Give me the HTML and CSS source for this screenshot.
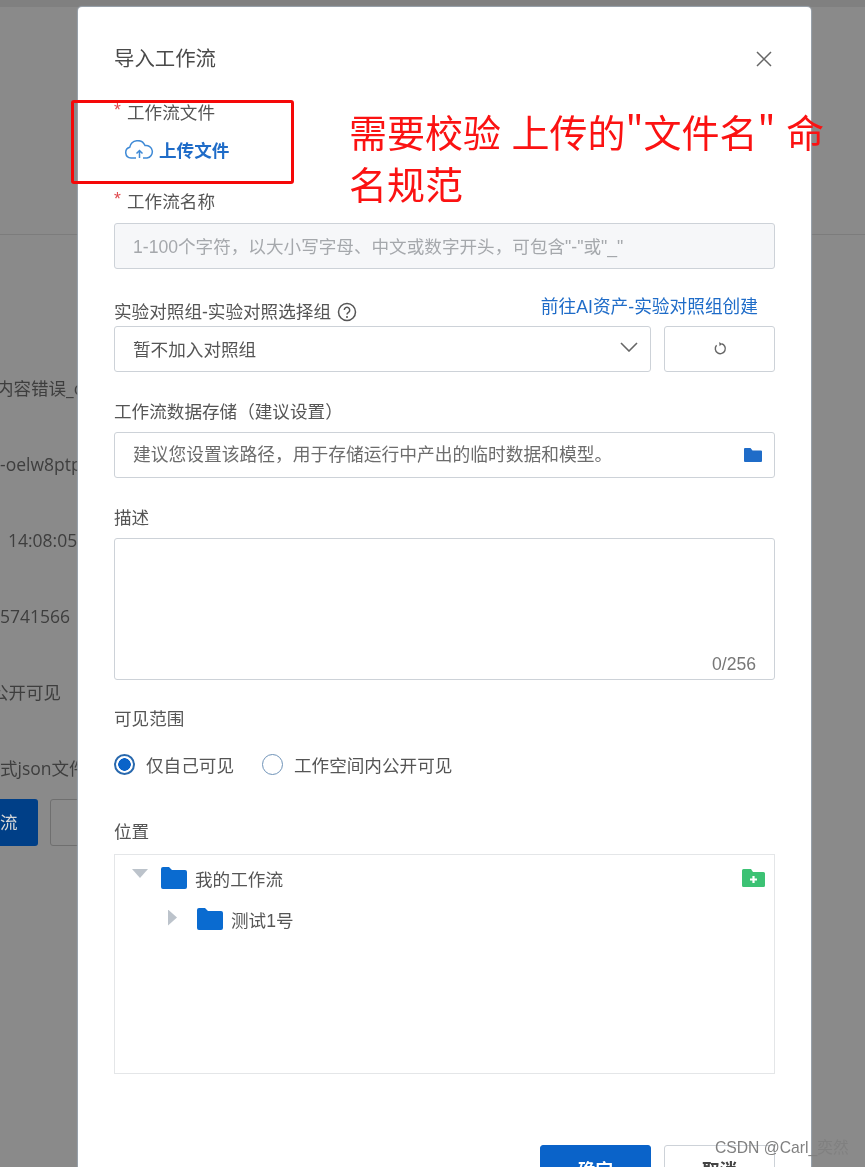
FILE: index.html
```html
<!DOCTYPE html>
<html lang="zh-CN">
<head>
<meta charset="utf-8">
<title>导入工作流</title>
<link rel="stylesheet" href="styles.css">
</head>
<body>
<div class="page">
  <div class="backdrop">
    <div class="top-strip"></div>
    <div class="divider"></div>
    <div class="bg-details">
      <div class="bg-row bg-row-a">内容错误_c</div>
      <div class="bg-row">-oelw8ptp</div>
      <div class="bg-row bg-row-b">14:08:05</div>
      <div class="bg-row">5741566</div>
      <div class="bg-row bg-row-c">公开可见</div>
      <div class="bg-row">式json文件</div>
      <div class="bg-actions">
        <span class="bg-primary">流</span>
        <span class="bg-ghost"></span>
      </div>
    </div>
  </div>

  <section class="modal">
    <header class="modal-head">
      <h1 class="modal-title">导入工作流</h1>
      <svg class="close" viewBox="0 0 18 18" width="18" height="18"><path d="M2 2 16 16M16 2 2 16" fill="none" stroke="#666" stroke-width="1.5"/></svg>
    </header>

    <div class="label gap-file"><i class="req">*</i>工作流文件</div>
    <div class="upload">
      <svg viewBox="0 0 30 19" width="30" height="19"><path d="M12 18H7A5.500 5.500 0 0 1 5.800 7.200 8 8 0 0 1 21 5.500 6.300 6.300 0 0 1 23 18H19" fill="none" stroke="#3f8ad6" stroke-width="1.500"/><path d="M15.500 18V11M12.500 13.500 15.500 10.500l3 3" fill="none" stroke="#3f8ad6" stroke-width="1.500"/></svg>
      <span>上传文件</span>
    </div>

    <div class="label gap-name"><i class="req">*</i>工作流名称</div>
    <div class="input input-disabled gap-input">1-100个字符，以大小写字母、中文或数字开头，可包含"-"或"_"</div>

    <div class="label-row gap-group">
      <div class="label">实验对照组-实验对照选择组
        <svg class="help" viewBox="0 0 20 20" width="20" height="20"><circle cx="10" cy="10" r="8.500" fill="none" stroke="#555" stroke-width="1.500"/><path d="M7.300 8a2.700 2.700 0 1 1 4.200 2.300c-1 .6-1.500 1-1.500 2.200" fill="none" stroke="#555" stroke-width="1.500"/><circle cx="10" cy="15" r="1" fill="#555"/></svg>
      </div>
      <a class="link">前往AI资产-实验对照组创建</a>
    </div>
    <div class="select-row">
      <div class="input select">
        <span>暂不加入对照组</span>
        <svg viewBox="0 0 18 10" width="18" height="10"><path d="M1 1 9 9 17 1" fill="none" stroke="#666" stroke-width="1.600"/></svg>
      </div>
      <div class="refresh">
        <svg viewBox="0 0 14 14" width="14" height="14"><path d="M8.500 1.800A5 5 0 1 1 3.600 3.300" fill="none" stroke="#666" stroke-width="1.400"/><path d="M6.200 0 9 2 6.500 4.200Z" fill="#666"/></svg>
      </div>
    </div>

    <div class="label gap-store">工作流数据存储（建议设置）</div>
    <div class="input input-path gap-input-s">
      <span>建议您设置该路径，用于存储运行中产出的临时数据和模型。</span>
      <svg viewBox="0 0 20 16" width="20" height="16"><path d="M1 2a1 1 0 0 1 1-1h5.500l2 2.500H18a1 1 0 0 1 1 1V14a1 1 0 0 1-1 1H2a1 1 0 0 1-1-1Z" fill="#1f6cc8"/></svg>
    </div>

    <div class="label gap-store">描述</div>
    <div class="textarea gap-input-s"><span class="count">0/256</span></div>

    <div class="label gap-vis">可见范围</div>
    <div class="radios">
      <label class="radio"><span class="dot dot-on"></span>仅自己可见</label>
      <label class="radio"><span class="dot"></span>工作空间内公开可见</label>
    </div>

    <div class="label gap-loc">位置</div>
    <div class="tree">
      <svg class="add" viewBox="0 0 23 18" width="23" height="18"><path d="M0 1.500A1.500 1.500 0 0 1 1.500 0H9l2 3h10.500A1.500 1.500 0 0 1 23 4.500v12a1.500 1.500 0 0 1-1.500 1.500h-20A1.500 1.500 0 0 1 0 16.500Z" fill="#3cc274"/><path d="M11.500 7v7M8 10.500h7" stroke="#fff" stroke-width="2.200"/></svg>
      <div class="node">
        <span class="caret caret-down"></span>
        <svg class="folder" viewBox="0 0 26 22" width="26" height="22"><path d="M0 2a2 2 0 0 1 2-2h6l3 3h13a2 2 0 0 1 2 2v15a2 2 0 0 1-2 2H2a2 2 0 0 1-2-2Z" fill="#0a6bd0"/></svg>
        <span>我的工作流</span>
      </div>
      <div class="node node-child">
        <span class="caret caret-right"></span>
        <svg class="folder" viewBox="0 0 26 22" width="26" height="22"><path d="M0 2a2 2 0 0 1 2-2h6l3 3h13a2 2 0 0 1 2 2v15a2 2 0 0 1-2 2H2a2 2 0 0 1-2-2Z" fill="#0a6bd0"/></svg>
        <span>测试1号</span>
      </div>
    </div>

    <footer class="actions">
      <button class="btn btn-primary">确定</button>
      <button class="btn">取消</button>
    </footer>
  </section>

  <div class="mark-box"></div>
  <p class="mark-text">需要校验 上传的"文件名" 命<br>名规范</p>
  <div class="watermark">CSDN @Carl_奕然</div>
</div>
</body>
</html>
```

FILE: styles.css
```css
* { box-sizing: border-box; }

html, body {
  margin: 0;
  height: 1167px;
  overflow: hidden;
  background: #8a8a8a;
}

.page {
  position: relative;
  width: 865px;
  height: 1167px;
  overflow: hidden;
  font-family: "Liberation Sans", "Noto Sans CJK SC", sans-serif;
  font-size: 17.6px;
  color: #555;
  filter: blur(0.6px);
}

.backdrop {
  position: absolute;
  inset: 0;
  background: #8a8a8a;
}

.top-strip {
  height: 7px;
  background: #808080;
}

.divider {
  margin-top: 227px;
  height: 1px;
  background: #7c7c7c;
}

.bg-details {
  width: 78px;
  margin-top: 140.5px;
  overflow: hidden;
  font-family: "Open Sans", "Noto Sans CJK SC", sans-serif;
  font-size: 17.5px;
  color: #3e3e3e;
}

.bg-row {
  height: 76px;
  line-height: 24px;
  white-space: nowrap;
}

.bg-row-a { margin-left: -4px; }
.bg-row-b { margin-left: 8px; }
.bg-row-c { margin-left: -9px; }

.bg-actions {
  display: flex;
  gap: 12px;
  margin-top: -32.3px;
}

.bg-primary {
  flex: none;
  width: 38px;
  height: 47px;
  padding-right: 22px;
  border-radius: 0 3px 3px 0;
  background: #003f87;
  color: #d8d8d8;
  line-height: 47px;
  text-align: right;
}

.bg-ghost {
  flex: none;
  width: 60px;
  height: 47px;
  border: 1px solid #6f6f6f;
  border-radius: 3px;
}

.modal {
  position: absolute;
  left: 78px;
  top: 7px;
  width: 733px;
  height: 1200px;
  padding: 36px;
  border-radius: 4px;
  background: #fff;
  box-shadow: 0 0 1px 1px #9aa3ad;
}

.modal-head {
  display: flex;
  align-items: center;
  justify-content: space-between;
  height: 32px;
}

.modal-title {
  margin: 0;
  font-size: 20.4px;
  font-weight: 400;
  line-height: 34px;
  color: #4a4a4a;
}

.close { margin-right: 2px; }

.label {
  position: relative;
  display: flex;
  align-items: center;
  height: 20px;
  line-height: 20px;
  white-space: nowrap;
}

.req {
  width: 13px;
  margin-top: -6px;
  font-style: normal;
  color: #e0494e;
}

.gap-file { margin-top: 28px; }
.gap-name { margin-top: 29px; }
.gap-input { margin-top: 11px; }
.gap-input-s { margin-top: 10px; }
.gap-group { margin-top: 33px; }
.gap-store { margin-top: 30px; }
.gap-vis { margin-top: 29px; }
.gap-loc { margin-top: 44px; }

.upload {
  display: flex;
  align-items: center;
  gap: 5px;
  height: 28px;
  margin-top: 12px;
  padding-left: 10px;
  font-weight: 700;
  color: #1f6cc8;
}

.input {
  height: 46px;
  padding: 0 18px;
  border: 1.500px solid #cdd2d8;
  border-radius: 3px;
  line-height: 46px;
  white-space: nowrap;
}

.input-disabled {
  background: #f6f7f9;
  color: #a5a8ac;
}

.label-row {
  display: flex;
  justify-content: space-between;
  height: 20px;
}

.help { margin-left: 6px; }

.link {
  margin: -5px 17px 0 0;
  line-height: 20px;
  font-size: 17.7px;
  color: #1f6cc8;
}

.select-row {
  display: flex;
  gap: 13px;
  margin-top: 4px;
}

.select {
  flex: 1;
  display: flex;
  align-items: center;
  justify-content: space-between;
  padding-top: 2px;
  padding-right: 12px;
}

.select svg { margin-top: -6px; }

.refresh {
  display: flex;
  align-items: center;
  justify-content: center;
  flex: none;
  width: 111px;
  height: 46px;
  border: 1.500px solid #cdd2d8;
  border-radius: 3px;
}

.input-path {
  display: flex;
  align-items: center;
  justify-content: space-between;
  padding-right: 11px;
  font-size: 17.75px;
  color: #6c6c6c;
}

.textarea {
  position: relative;
  height: 142px;
  border: 1.500px solid #cdd2d8;
  border-radius: 3px;
}

.count {
  position: absolute;
  right: 18px;
  bottom: 5px;
  line-height: 20px;
  color: #777;
}

.radios {
  display: flex;
  align-items: center;
  gap: 28px;
  height: 28px;
  margin-top: 21px;
}

.radio {
  display: flex;
  align-items: center;
  gap: 11px;
}

.dot {
  width: 21px;
  height: 21px;
  border: 1.500px solid #6f93b8;
  border-radius: 50%;
}

.dot-on {
  border: 2px solid #2868ad;
  background: radial-gradient(circle, #0a63c9 0 6px, #fff 6.500px);
}

.tree {
  position: relative;
  height: 220px;
  margin-top: 12px;
  border: 1.500px solid #e4e6e8;
}

.add {
  position: absolute;
  top: 14px;
  right: 9px;
}

.node {
  display: flex;
  align-items: center;
  height: 24px;
  margin-top: 11px;
  padding-left: 17px;
}

.node-child {
  margin-top: 17px;
  padding-left: 53px;
}

.folder { margin-right: 8px; }

.caret {
  flex: none;
  width: 0;
  height: 0;
}

.caret-down {
  width: 16px;
  height: 9px;
  margin: -9px 13px 0 0;
  background: #bcc3cb;
  clip-path: polygon(0 0, 100% 0, 50% 100%);
}

.caret-right {
  width: 9px;
  height: 16px;
  margin: -3px 20px 0 0;
  background: #bcc3cb;
  clip-path: polygon(0 0, 100% 50%, 0 100%);
}

.actions {
  display: flex;
  justify-content: flex-end;
  gap: 13px;
  margin-top: 71px;
}

.btn {
  width: 111px;
  height: 46px;
  padding: 0;
  border: 1.500px solid #cdd2d8;
  border-radius: 3px;
  background: #fff;
  font: inherit;
  font-weight: 700;
  color: #444;
}

.btn-primary {
  border-color: #0a63c9;
  background: #0a63c9;
  color: #fff;
}

.mark-box {
  position: absolute;
  left: 71px;
  top: 100px;
  width: 223px;
  height: 84px;
  border: 3.500px solid #f50808;
  border-radius: 3px;
}

.mark-text {
  position: absolute;
  left: 349px;
  top: 105px;
  margin: 0;
  font-family: "Noto Sans CJK SC", sans-serif;
  font-size: 38px;
  line-height: 52px;
  word-spacing: 2px;
  color: #fb1212;
  white-space: nowrap;
}

.watermark {
  position: absolute;
  left: 715px;
  top: 1138px;
  font-size: 15.7px;
  line-height: 20px;
  color: #808080;
  white-space: nowrap;
}
```
